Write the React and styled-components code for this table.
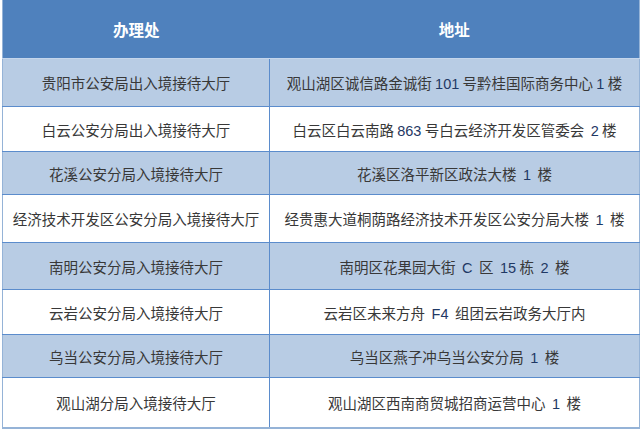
import React from "react";
import styled, { createGlobalStyle } from "styled-components";

const GlobalStyle = createGlobalStyle`
  body {
    margin: 0;
    background: #ffffff;
    font-family: "Noto Sans CJK SC", "Noto Sans", sans-serif;
  }
`;

const Wrapper = styled.div`
  padding: 0 1px 0 2px;
  width: 640px;
  box-sizing: border-box;
`;

const StyledTable = styled.table`
  width: 637px;
  border-collapse: collapse;
  table-layout: fixed;
  border-left: 1px solid #95b3d7;
  border-right: 1px solid #95b3d7;
  border-bottom: 2px solid #95b3d7;
`;

const HeadCell = styled.th`
  height: 58px;
  padding: 0;
  background-color: #4f81bd;
  color: #ffffff;
  font-size: 15.5px;
  font-weight: bold;
  text-align: center;
  vertical-align: middle;
  border-bottom: 1px solid #c5d6ec;
`;

const Row = styled.tr`
  background-color: ${(p) => (p.$shaded ? "#b8cce4" : "#ffffff")};
  height: ${(p) => p.$h}px;
`;

const Cell = styled.td`
  padding: 0;
  font-size: 14.5px;
  color: #383838;
  text-align: center;
  vertical-align: middle;
  border-top: 1px solid #5b8ccc;
  border-left: ${(p) => (p.$divider ? "1px solid #5b8ccc" : "none")};
  white-space: nowrap;
`;

const Num = styled.span`
  font-family: "Liberation Sans", "Noto Sans", sans-serif;
  color: #1f3864;
`;

const rows = [
  { name: "贵阳市公安局出入境接待大厅", addr: ["观山湖区诚信路金诚街 ", "101", " 号黔桂国际商务中心 ", "1", " 楼"], h: 48 },
  { name: "白云公安分局出入境接待大厅", addr: ["白云区白云南路 ", "863", " 号白云经济开发区管委会  ", "2", " 楼"], h: 45 },
  { name: "花溪公安分局入境接待大厅", addr: ["花溪区洛平新区政法大楼  ", "1", "  楼"], h: 43 },
  { name: "经济技术开发区公安分局入境接待大厅", addr: ["经贵惠大道桐荫路经济技术开发区公安分局大楼  ", "1", "  楼"], h: 48 },
  { name: "南明公安分局入境接待大厅", addr: ["南明区花果园大街  ", "C", "  区  ", "15", " 栋  ", "2", "  楼"], h: 47 },
  { name: "云岩公安分局入境接待大厅", addr: ["云岩区未来方舟  ", "F4", "  组团云岩政务大厅内"], h: 45 },
  { name: "乌当公安分局入境接待大厅", addr: ["乌当区燕子冲乌当公安分局  ", "1", "  楼"], h: 43 },
  { name: "观山湖分局入境接待大厅", addr: ["观山湖区西南商贸城招商运营中心  ", "1", "  楼"], h: 50 },
];

const Address = ({ parts }) => (
  <>
    {parts.map((part, i) =>
      i % 2 === 1 ? <Num key={i}>{part}</Num> : <span key={i} style={{ whiteSpace: "pre" }}>{part}</span>
    )}
  </>
);

const App = () => {
  return (
    <Wrapper>
      <GlobalStyle />
      <StyledTable>
        <colgroup>
          <col style={{ width: 267 }} />
          <col style={{ width: 370 }} />
        </colgroup>
        <thead>
          <tr>
            <HeadCell>办理处</HeadCell>
            <HeadCell>地址</HeadCell>
          </tr>
        </thead>
        <tbody>
          {rows.map((row, i) => (
            <Row key={row.name} $shaded={i % 2 === 0} $h={row.h}>
              <Cell>{row.name}</Cell>
              <Cell $divider>
                <Address parts={row.addr} />
              </Cell>
            </Row>
          ))}
        </tbody>
      </StyledTable>
    </Wrapper>
  );
};

export default App;
